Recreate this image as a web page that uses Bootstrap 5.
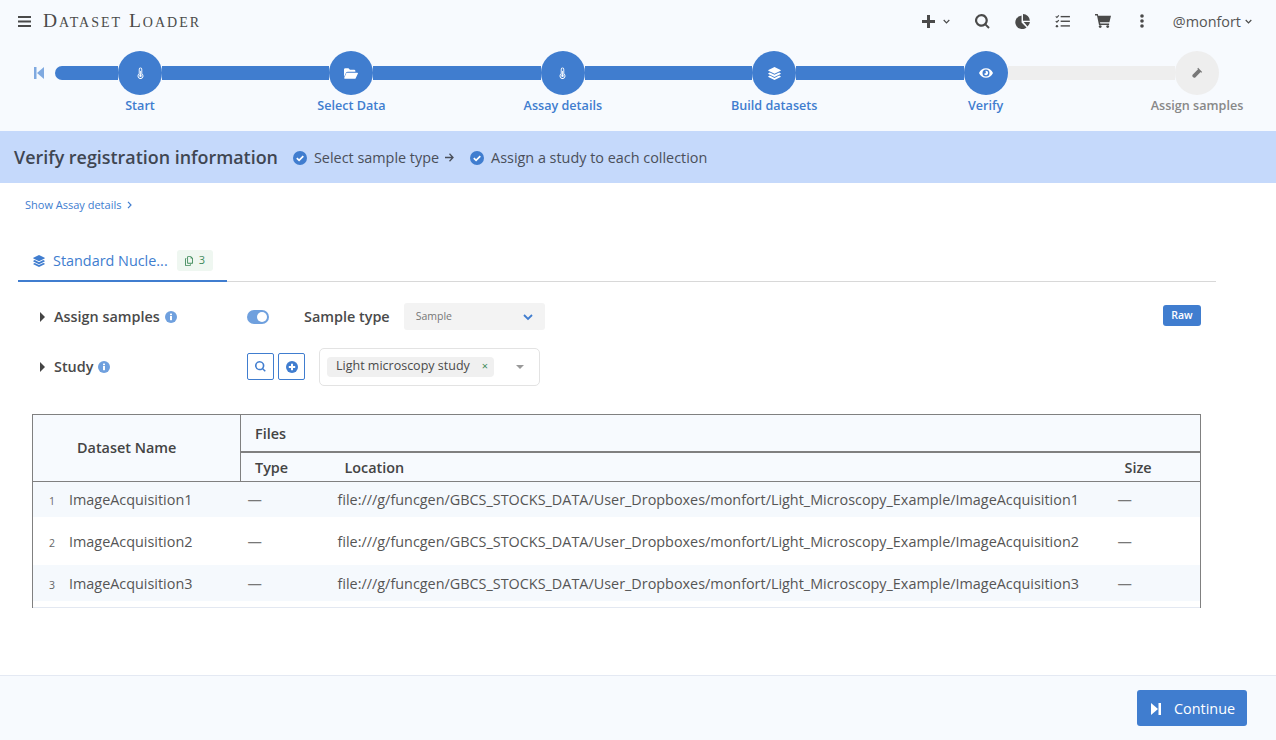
<!DOCTYPE html>
<html lang="en">
<head>
  <meta charset="UTF-8"/>
  <meta name="viewport" content="width=device-width, initial-scale=1.0"/>
  <title>Dataset Loader</title>
  <link href="https://cdn.jsdelivr.net/npm/bootstrap@5.3.0/dist/css/bootstrap.min.css" rel="stylesheet"/>
  <style>
    html, body { height: 100%; }
    body { font-family: "Open Sans", "Liberation Sans", sans-serif; font-size: 14.4px; color: #4a4a4a; background: #fff; overflow: hidden; }
    svg { display: block; fill: currentColor; }
    .page-wrap { height: 740px; }
    .top-area { height: 131px; background: #f7fafe; }
    .top-bar { height: 43px; padding: 0 24px 0 18px; color: #4a4a4a; }
    .brand-name { font-family: "Liberation Serif", serif; font-variant: small-caps; font-size: 19.5px; letter-spacing: 2px; margin: 0 0 2px 12px; color: #4a4a4a; line-height: 1; }
    .user-name { font-size: 14.4px; color: #555; margin-left: 29px; }
    .top-gap { margin-left: 25px; }

    .stepper { padding: 8px 57px 0 33px; }
    .skip-ico { width: 22px; height: 44px; color: #7fa9e0; flex: none; }
    .step-item { width: 44px; flex: none; color: #407dcf; font-size: 12.6px; font-weight: 600; }
    .step-item.todo { color: #888; }
    .step-dot { width: 44px; height: 44px; border-radius: 50%; background: #407dcf; color: #fff; }
    .step-item.todo .step-dot { background: #eee; color: #777; }
    .step-lbl { white-space: nowrap; margin-top: 2px; line-height: 17px; }
    .step-bar { flex: 1 1 0; height: 14px; background: #407dcf; margin-top: 15px; }
    .step-bar.first { flex: none; width: 63px; border-radius: 7px 0 0 7px; }
    .step-bar.todo { background: #eee; }

    .title-band { height: 52px; background: #c5d9fb; padding: 1px 0 0 14px; color: #4a4f5a; }
    .title-band h1 { font-size: 17.9px; font-weight: 600; margin: 0 15px 0 0; color: #3f4652; }
    .check-ico { width: 14px; height: 14px; color: #407dcf; margin-right: 7px; flex: none; }
    .arrow-ico { margin: 0 16px 0 6px; }

    .main-area { padding: 10px 60px 0 18px; }
    .show-link { font-size: 11px; color: #407dcf; text-decoration: none; margin-left: 7px; line-height: 16px; }
    .show-link svg { margin-left: 6px; }

    .tab-row { margin-top: 31px; border-bottom: 1px solid #d8d8d8; height: 36px; }
    .tab-active { width: 209px; height: 36px; border-bottom: 2px solid #407dcf; margin-bottom: -1px; padding: 0 0 4px 15px; color: #407dcf; }
    .tab-count { background: #eff7f1; color: #3f8a5a; border-radius: 3px; font-size: 11px; height: 21px; padding: 0 8px; margin-left: 9px; }
    .tab-count svg { margin-right: 6px; }

    .form-line { padding-left: 22px; }
    .form-lbl { font-weight: 600; color: #4a4a4a; }
    .lbl-col { width: 207px; flex: none; }
    .lbl-col.low { padding-top: 2px; }
    .caret-ico { width: 6px; height: 10px; margin-right: 8px; color: #444; }
    .info-ico { width: 12px; height: 12px; color: #6fa0de; margin-left: 5px; }
    .toggle-pill { width: 22px; height: 14px; border-radius: 7px; background: #6fa0de; padding: 2px; margin-top: 1px; }
    .toggle-pill span { width: 10px; height: 10px; border-radius: 50%; background: #fff; margin-left: auto; display: block; }
    .type-select { width: 141px; height: 27px; background: #f3f3f3; border-radius: 3px; font-size: 10.5px; color: #777; padding: 2px 12px 0; margin-left: 14px; }
    .raw-tag { background: #407dcf; color: #fff; font-size: 10.5px; font-weight: 600; border-radius: 3px; width: 38px; height: 21px; margin: 0 15px 1px 0; }
    .sq-btn { width: 27px; height: 27px; border: 1px solid #407dcf; border-radius: 2px; color: #407dcf; background: #fff; padding: 0; }
    .study-select { width: 221px; height: 38px; border: 1px solid #e3e3e3; border-radius: 5px; margin-left: 14px; padding: 0 15px 0 7px; }
    .study-chip { background: #f0f0f0; border-radius: 4px; font-size: 12.5px; height: 20px; padding: 0 6px 0 9px; color: #4a4a4a; white-space: nowrap; }
    .chip-x { color: #3f8a5a; font-size: 11px; margin-left: 12px; }
    .tri-down { width: 0; height: 0; border-left: 4px solid transparent; border-right: 4px solid transparent; border-top: 4px solid #999; }

    .data-table { width: 1168px; margin: 28px 0 0 14px; table-layout: fixed; border-collapse: collapse; color: #555; border-bottom: 1px solid #e3e8f1; }
    .data-table th { background: #f7fafe; font-weight: 600; color: #444; border: 0; padding: 1px 14px 0; vertical-align: middle; }
    .data-table thead { border: 1px solid #808080; }
    .data-table .name-head { padding-left: 44px; border-right: 1px solid #808080; }
    .data-table .files-head { height: 38px; border-bottom: 2px solid #808080; }
    .data-table .sub-head th { height: 29px; }
    .data-table td { padding: 1px 7px 0; border: 0; vertical-align: middle; }
    .data-table tbody { border-left: 1px solid #808080; border-right: 1px solid #808080; }
    .data-table .stripe td { background: #f5f9fd; height: 36px; }
    .data-table .plain td { height: 48px; }
    .data-table .tail td { height: 6px; padding: 0; }
    .row-num { font-size: 10.5px; color: #666; width: 20px; margin-left: 9px; display: inline-block; }
    .dash-cell { color: #777; }

    .bottom-bar { height: 65px; background: #f7fafe; border-top: 1px solid #e4e9f3; padding-right: 29px; }
    .go-btn { width: 110px; height: 36px; background: #407dcf; border: 0; border-radius: 3px; color: #fff; font-size: 14.4px; padding: 1px 0 0 14px; }
    .go-btn svg { margin-right: 13px; }
  </style>
</head>
<body>

<svg width="0" height="0" class="position-absolute">
  <symbol id="i-thermo" viewBox="0 0 10 16"><path fill-rule="evenodd" d="M5 0a2.5 2.5 0 0 1 2.5 2.5v6.7a4 4 0 1 1-5 0V2.500A2.500 2.500 0 0 1 5 0zm0 1.300A1.200 1.200 0 0 0 3.800 2.500v7.400a2.700 2.700 0 1 0 2.400 0V2.500A1.200 1.200 0 0 0 5 1.300z"/><circle cx="5" cy="12" r="1.700"/><rect x="4.400" y="5" width="1.200" height="7"/></symbol>
  <symbol id="i-folder" viewBox="0 0 16 12"><path d="M0 10V1.500A1.500 1.500 0 0 1 1.500 0h3.600l1.700 1.700h4.700A1.500 1.500 0 0 1 13 3.200V4H4.300a2.300 2.300 0 0 0-2 1.100z"/><path d="M3.500 5h11.700c.6 0 1 .6.700 1.100l-2.400 4.900c-.2.600-.7 1-1.300 1H1c-.6 0-1-.6-.7-1.100l2-4.700A1.500 1.500 0 0 1 3.500 5z"/></symbol>
  <symbol id="i-layers" viewBox="0 0 16 16"><path d="M8 0l7.500 3.700c.4.200.4.700 0 .9L8 8.300.5 4.600c-.4-.2-.4-.7 0-.9z"/><path d="M2.300 6.700L8 9.500l5.700-2.800 1.800.9c.4.200.4.700 0 .9L8 12.200.5 8.500c-.4-.2-.4-.7 0-.9z"/><path d="M2.300 10.600L8 13.400l5.700-2.800 1.800.9c.4.200.4.700 0 .9L8 16 .5 12.400c-.4-.2-.4-.7 0-.9z"/></symbol>
  <symbol id="i-eye" viewBox="0 0 16 11"><path fill-rule="evenodd" d="M8 0c3.500 0 6.500 2.100 8 5.500C14.500 8.900 11.500 11 8 11S1.500 8.900 0 5.500C1.500 2.100 4.500 0 8 0zm0 1.500a4 4 0 1 0 0 8 4 4 0 0 0 0-8z"/><path d="M8 3a2.500 2.500 0 1 1-2.400 3.200c.8.300 1.900-.1 2.200-.9.200-.7 0-1.500-.6-2A2.500 2.500 0 0 1 8 3z"/></symbol>
  <symbol id="i-vial" viewBox="0 0 14 14"><path d="M8.300 1L13 5.700l-.9.900-.8-.8-6.600 6.600a2.500 2.500 0 0 1-3.100-3.100L8.200 2.700l-.8-.8z"/></symbol>
  <symbol id="i-skip-back" viewBox="0 0 10 12"><rect width="2.500" height="12"/><path d="M10 0v12L3 6z"/></symbol>
  <symbol id="i-skip-next" viewBox="0 0 10 12"><rect x="7.500" width="2.500" height="12"/><path d="M0 0v12l7-6z"/></symbol>
  <symbol id="i-search" viewBox="0 0 16 16"><path fill-rule="evenodd" d="M6.800 0a6.800 6.800 0 0 1 5.500 10.800l3.400 3.400-1.500 1.500-3.400-3.400A6.800 6.800 0 1 1 6.800 0zm0 2.300a4.500 4.500 0 1 0 0 9 4.500 4.500 0 0 0 0-9z"/></symbol>
  <symbol id="i-pie" viewBox="0 0 16 16"><path d="M7 1.500v7.600l5.300 5.300A7.300 7.300 0 1 1 7 1.500z"/><path d="M8.500 0a7.500 7.500 0 0 1 7.400 7.200H8.500z"/><path d="M9.300 8.500h6.600a7.300 7.300 0 0 1-2.500 4.800z"/></symbol>
  <symbol id="i-tasks" viewBox="0 0 16 14"><rect x="6" y="1" width="10" height="1.500"/><rect x="6" y="6" width="10" height="1.500"/><rect x="6" y="11" width="10" height="1.500"/><path d="M3.600 0l.9.800L2 3.500.3 2l.8-.8.800.6zM3.600 5l.9.800L2 8.500.3 7l.8-.8.800.6z"/><circle cx="2" cy="12" r="1.300"/></symbol>
  <symbol id="i-cart" viewBox="0 0 16 14"><path d="M0 0h2.800l.4 1.700H16l-1.600 6.600H5l.3 1.300h8.800v1.500H4L2 1.500H0z"/><circle cx="5.200" cy="12.600" r="1.400"/><circle cx="12.700" cy="12.600" r="1.400"/></symbol>
  <symbol id="i-check" viewBox="0 0 14 14"><circle cx="7" cy="7" r="7"/><path d="M3.800 7.100l2.300 2.300 4.200-4.200" fill="none" stroke="#fff" stroke-width="1.700"/></symbol>
  <symbol id="i-info" viewBox="0 0 12 12"><circle cx="6" cy="6" r="6"/><rect x="5" y="5" width="2" height="4.200" fill="#fff"/><rect x="5" y="2.600" width="2" height="1.600" fill="#fff"/></symbol>
  <symbol id="i-copy" viewBox="0 0 10 12"><path d="M3.500 0h4L10 2.500V8.500a.8.800 0 0 1-.8.800H3.500a.8.800 0 0 1-.8-.8V.8A.8.800 0 0 1 3.500 0zm.3 1.100v7.100H8.900V3H7V1.100z" fill-rule="evenodd"/><path d="M0 3.300A.8.800 0 0 1 .8 2.500H1.700v1.100H1.100v7.300h5.100v-.7h1.100v1A.8.800 0 0 1 6.500 12H.8a.8.800 0 0 1-.8-.8z"/></symbol>
</svg>

<div class="page-wrap d-flex flex-column">
  <div class="top-area">
    <div class="top-bar d-flex align-items-center">
      <svg width="13" height="11" viewBox="0 0 13 11"><rect width="13" height="2"/><rect y="4.500" width="13" height="2"/><rect y="9" width="13" height="2"/></svg>
      <span class="brand-name">Dataset Loader</span>
      <div class="ms-auto d-flex align-items-center">
        <svg width="13" height="13" viewBox="0 0 13 13"><path d="M5 0h3v5h5v3H8v5H5V8H0V5h5z"/></svg>
        <svg class="ms-2" width="7" height="5" viewBox="0 0 7 5"><path d="M.7 1l2.800 2.800L6.300 1" fill="none" stroke="currentColor" stroke-width="1.200"/></svg>
        <svg class="top-gap" width="15" height="15"><use href="#i-search"/></svg>
        <svg class="top-gap" width="15" height="15"><use href="#i-pie"/></svg>
        <svg class="top-gap" width="15" height="13"><use href="#i-tasks"/></svg>
        <svg class="top-gap" width="16" height="14"><use href="#i-cart"/></svg>
        <svg class="top-gap" width="4" height="14" viewBox="0 0 4 14" style="margin-left:29px"><circle cx="2" cy="2" r="1.800"/><circle cx="2" cy="7" r="1.800"/><circle cx="2" cy="12" r="1.800"/></svg>
        <span class="user-name">@monfort</span>
        <svg class="ms-1" width="7" height="5" viewBox="0 0 7 5"><path d="M.7 1l2.800 2.800L6.300 1" fill="none" stroke="currentColor" stroke-width="1.200"/></svg>
      </div>
    </div>

    <div class="stepper d-flex">
      <div class="skip-ico d-flex align-items-center"><svg width="10" height="12" style="margin-left:1px"><use href="#i-skip-back"/></svg></div>
      <div class="step-bar first"></div>
      <div class="step-item d-flex flex-column align-items-center">
        <div class="step-dot d-flex align-items-center justify-content-center"><svg width="7" height="12"><use href="#i-thermo"/></svg></div>
        <div class="step-lbl">Start</div>
      </div>
      <div class="step-bar"></div>
      <div class="step-item d-flex flex-column align-items-center">
        <div class="step-dot d-flex align-items-center justify-content-center"><svg width="14" height="11"><use href="#i-folder"/></svg></div>
        <div class="step-lbl">Select Data</div>
      </div>
      <div class="step-bar"></div>
      <div class="step-item d-flex flex-column align-items-center">
        <div class="step-dot d-flex align-items-center justify-content-center"><svg width="7" height="12"><use href="#i-thermo"/></svg></div>
        <div class="step-lbl">Assay details</div>
      </div>
      <div class="step-bar"></div>
      <div class="step-item d-flex flex-column align-items-center">
        <div class="step-dot d-flex align-items-center justify-content-center"><svg width="13" height="13"><use href="#i-layers"/></svg></div>
        <div class="step-lbl">Build datasets</div>
      </div>
      <div class="step-bar"></div>
      <div class="step-item d-flex flex-column align-items-center">
        <div class="step-dot d-flex align-items-center justify-content-center"><svg width="14" height="10"><use href="#i-eye"/></svg></div>
        <div class="step-lbl">Verify</div>
      </div>
      <div class="step-bar todo"></div>
      <div class="step-item todo d-flex flex-column align-items-center">
        <div class="step-dot d-flex align-items-center justify-content-center"><svg width="12" height="12"><use href="#i-vial"/></svg></div>
        <div class="step-lbl">Assign samples</div>
      </div>
    </div>
  </div>

  <div class="title-band d-flex align-items-center">
    <h1>Verify registration information</h1>
    <svg class="check-ico"><use href="#i-check"/></svg>
    <span>Select sample type</span>
    <svg class="arrow-ico" width="9" height="9" viewBox="0 0 9 9"><path d="M4.500.8L8 4.500 4.500 8.200M8 4.500H0" fill="none" stroke="currentColor" stroke-width="1.300"/></svg>
    <svg class="check-ico"><use href="#i-check"/></svg>
    <span>Assign a study to each collection</span>
  </div>

  <div class="main-area flex-grow-1">
    <a class="show-link d-inline-flex align-items-center" href="#">Show Assay details
      <svg width="5" height="8" viewBox="0 0 5 8"><path d="M1 .8L4 4 1 7.200" fill="none" stroke="currentColor" stroke-width="1.200"/></svg>
    </a>

    <div class="tab-row">
      <div class="tab-active d-flex align-items-center">
        <svg width="12" height="12"><use href="#i-layers"/></svg>
        <span class="ms-2">Standard Nucle...</span>
        <span class="tab-count d-flex align-items-center"><svg width="8" height="10"><use href="#i-copy"/></svg>3</span>
      </div>
    </div>

    <div class="form-line d-flex align-items-center" style="margin-top:21px;height:27px">
      <div class="lbl-col low d-flex align-items-center">
        <svg class="caret-ico" viewBox="0 0 6 10"><path d="M0 0l5 5-5 5z"/></svg>
        <span class="form-lbl">Assign samples</span>
        <svg class="info-ico"><use href="#i-info"/></svg>
      </div>
      <div class="toggle-pill"><span></span></div>
      <span class="form-lbl" style="margin-left:35px;padding-top:2px">Sample type</span>
      <div class="type-select d-flex align-items-center justify-content-between">
        <span>Sample</span>
        <svg width="10" height="7" viewBox="0 0 10 7" style="color:#407dcf"><path d="M1 1l4 4 4-4" fill="none" stroke="currentColor" stroke-width="1.800"/></svg>
      </div>
      <div class="raw-tag ms-auto d-flex align-items-center justify-content-center">Raw</div>
    </div>

    <div class="form-line d-flex align-items-center" style="margin-top:18px;height:38px">
      <div class="lbl-col d-flex align-items-center">
        <svg class="caret-ico" viewBox="0 0 6 10"><path d="M0 0l5 5-5 5z"/></svg>
        <span class="form-lbl">Study</span>
        <svg class="info-ico"><use href="#i-info"/></svg>
      </div>
      <button class="sq-btn d-flex align-items-center justify-content-center"><svg width="11" height="11"><use href="#i-search"/></svg></button>
      <button class="sq-btn d-flex align-items-center justify-content-center" style="margin-left:4px"><svg width="12" height="12" viewBox="0 0 12 12"><circle cx="6" cy="6" r="6"/><path d="M5 2.800h2V5h2.200v2H7v2.200H5V7H2.800V5H5z" fill="#fff"/></svg></button>
      <div class="study-select d-flex align-items-center justify-content-between">
        <span class="study-chip d-flex align-items-center">Light microscopy study<span class="chip-x">&times;</span></span>
        <span class="tri-down"></span>
      </div>
    </div>

    <table class="data-table">
      <colgroup><col style="width:208px"/><col style="width:90px"/><col style="width:780px"/><col style="width:90px"/></colgroup>
      <thead>
        <tr>
          <th rowspan="2" class="name-head">Dataset Name</th>
          <th colspan="3" class="files-head">Files</th>
        </tr>
        <tr class="sub-head">
          <th>Type</th>
          <th>Location</th>
          <th>Size</th>
        </tr>
      </thead>
      <tbody id="rows"></tbody>
    </table>
  </div>

  <div class="bottom-bar d-flex align-items-center justify-content-end">
    <button class="go-btn d-flex align-items-center"><svg width="10" height="12"><use href="#i-skip-next"/></svg>Continue</button>
  </div>
</div>

<script>
  const base = "file:///g/funcgen/GBCS_STOCKS_DATA/User_Dropboxes/monfort/Light_Microscopy_Example/";
  const body = document.getElementById("rows");
  [1, 2, 3].forEach(n => {
    const tr = document.createElement("tr");
    tr.className = n % 2 ? "stripe" : "plain";
    tr.innerHTML = `
      <td><span class="row-num">${n}</span>ImageAcquisition${n}</td>
      <td class="dash-cell">—</td>
      <td>${base}ImageAcquisition${n}</td>
      <td class="dash-cell">—</td>`;
    body.appendChild(tr);
  });
  const tail = document.createElement("tr");
  tail.className = "tail";
  tail.innerHTML = '<td colspan="4"></td>';
  body.appendChild(tail);
</script>
<script src="https://cdn.jsdelivr.net/npm/bootstrap@5.3.0/dist/js/bootstrap.bundle.min.js"></script>
</body>
</html>
